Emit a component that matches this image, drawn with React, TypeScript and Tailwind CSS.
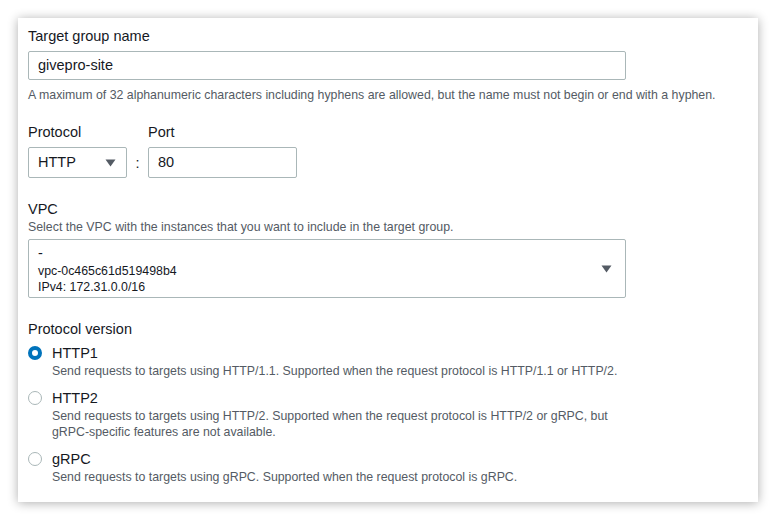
import React from "react";

const Caret = () => (
  <svg width="11" height="8" viewBox="0 0 11 8" className="shrink-0">
    <path d="M0.5 0.5 L10.5 0.5 L5.5 7.5 Z" fill="#545b64" />
  </svg>
);

const Radio = ({ checked }: { checked?: boolean }) =>
  checked ? (
    <span className="w-[14px] h-[14px] rounded-full border-[4px] border-[#0073bb] bg-white shrink-0" />
  ) : (
    <span className="w-[14px] h-[14px] rounded-full border border-[#aab7b8] bg-white shrink-0" />
  );

export default function App() {
  return (
    <div
      className="w-[776px] h-[520px] bg-white overflow-hidden pt-[18px] pl-[18px]"
      style={{ fontFamily: '"Liberation Sans", Arial, sans-serif' }}
    >
      <div className="w-[740px] h-[484px] bg-white shadow-[0_1px_10px_rgba(0,0,0,0.32)] px-[10px] pt-[8px] text-[#16191f]">
        <div className="text-[14.5px] leading-[20px]">Target group name</div>
        <div className="mt-[5px] w-[598px] h-[29px] border border-[#aab7b8] rounded-[2px] flex items-center px-[9px] text-[14.5px]">
          givepro-site
        </div>
        <div className="mt-[7px] text-[12.35px] leading-[16px] text-[#545b64]">
          A maximum of 32 alphanumeric characters including hyphens are allowed, but the name must not begin or end with a hyphen.
        </div>

        <div className="mt-[19px] flex">
          <div className="flex flex-col">
            <div className="text-[14.5px] leading-[20px]">Protocol</div>
            <div className="mt-[5px] w-[99px] h-[31px] border border-[#aab7b8] rounded-[2px] flex items-center justify-between pl-[9px] pr-[10px] text-[14.5px]">
              <span>HTTP</span>
              <Caret />
            </div>
          </div>
          <div className="w-[21px] flex items-end justify-center h-[56px] pb-[5px] text-[14.5px] leading-[20px]">:</div>
          <div className="flex flex-col">
            <div className="text-[14.5px] leading-[20px]">Port</div>
            <div className="mt-[5px] w-[149px] h-[31px] border border-[#aab7b8] rounded-[2px] flex items-center px-[9px] text-[14.5px]">
              80
            </div>
          </div>
        </div>

        <div className="mt-[21px] text-[14.5px] leading-[20px]">VPC</div>
        <div className="text-[12.35px] leading-[16px] text-[#545b64]">
          Select the VPC with the instances that you want to include in the target group.
        </div>
        <div className="mt-[4px] w-[598px] h-[59px] border border-[#aab7b8] rounded-[2px] flex items-center justify-between pl-[9px] pr-[13px]">
          <div className="flex flex-col pt-[1px]">
            <div className="text-[14.5px] leading-[20px]">-</div>
            <div className="text-[12.35px] leading-[16px] text-[#16191f]">vpc-0c465c61d519498b4</div>
            <div className="text-[12.35px] leading-[16px] text-[#16191f]">IPv4: 172.31.0.0/16</div>
          </div>
          <Caret />
        </div>

        <div className="mt-[21px] text-[14.5px] leading-[20px]">Protocol version</div>

        <div className="mt-[4px] flex items-center gap-[10px]">
          <Radio checked />
          <span className="text-[14.5px] leading-[20px]">HTTP1</span>
        </div>
        <div className="pl-[24px] text-[12.35px] leading-[16px] text-[#545b64]">
          Send requests to targets using HTTP/1.1. Supported when the request protocol is HTTP/1.1 or HTTP/2.
        </div>

        <div className="mt-[9px] flex items-center gap-[10px]">
          <Radio />
          <span className="text-[14.5px] leading-[20px]">HTTP2</span>
        </div>
        <div className="pl-[24px] w-[600px] text-[12.35px] leading-[16px] text-[#545b64]">
          Send requests to targets using HTTP/2. Supported when the request protocol is HTTP/2 or gRPC, but gRPC-specific features are not available.
        </div>

        <div className="mt-[9px] flex items-center gap-[10px]">
          <Radio />
          <span className="text-[14.5px] leading-[20px]">gRPC</span>
        </div>
        <div className="pl-[24px] text-[12.35px] leading-[16px] text-[#545b64]">
          Send requests to targets using gRPC. Supported when the request protocol is gRPC.
        </div>
      </div>
    </div>
  );
}
